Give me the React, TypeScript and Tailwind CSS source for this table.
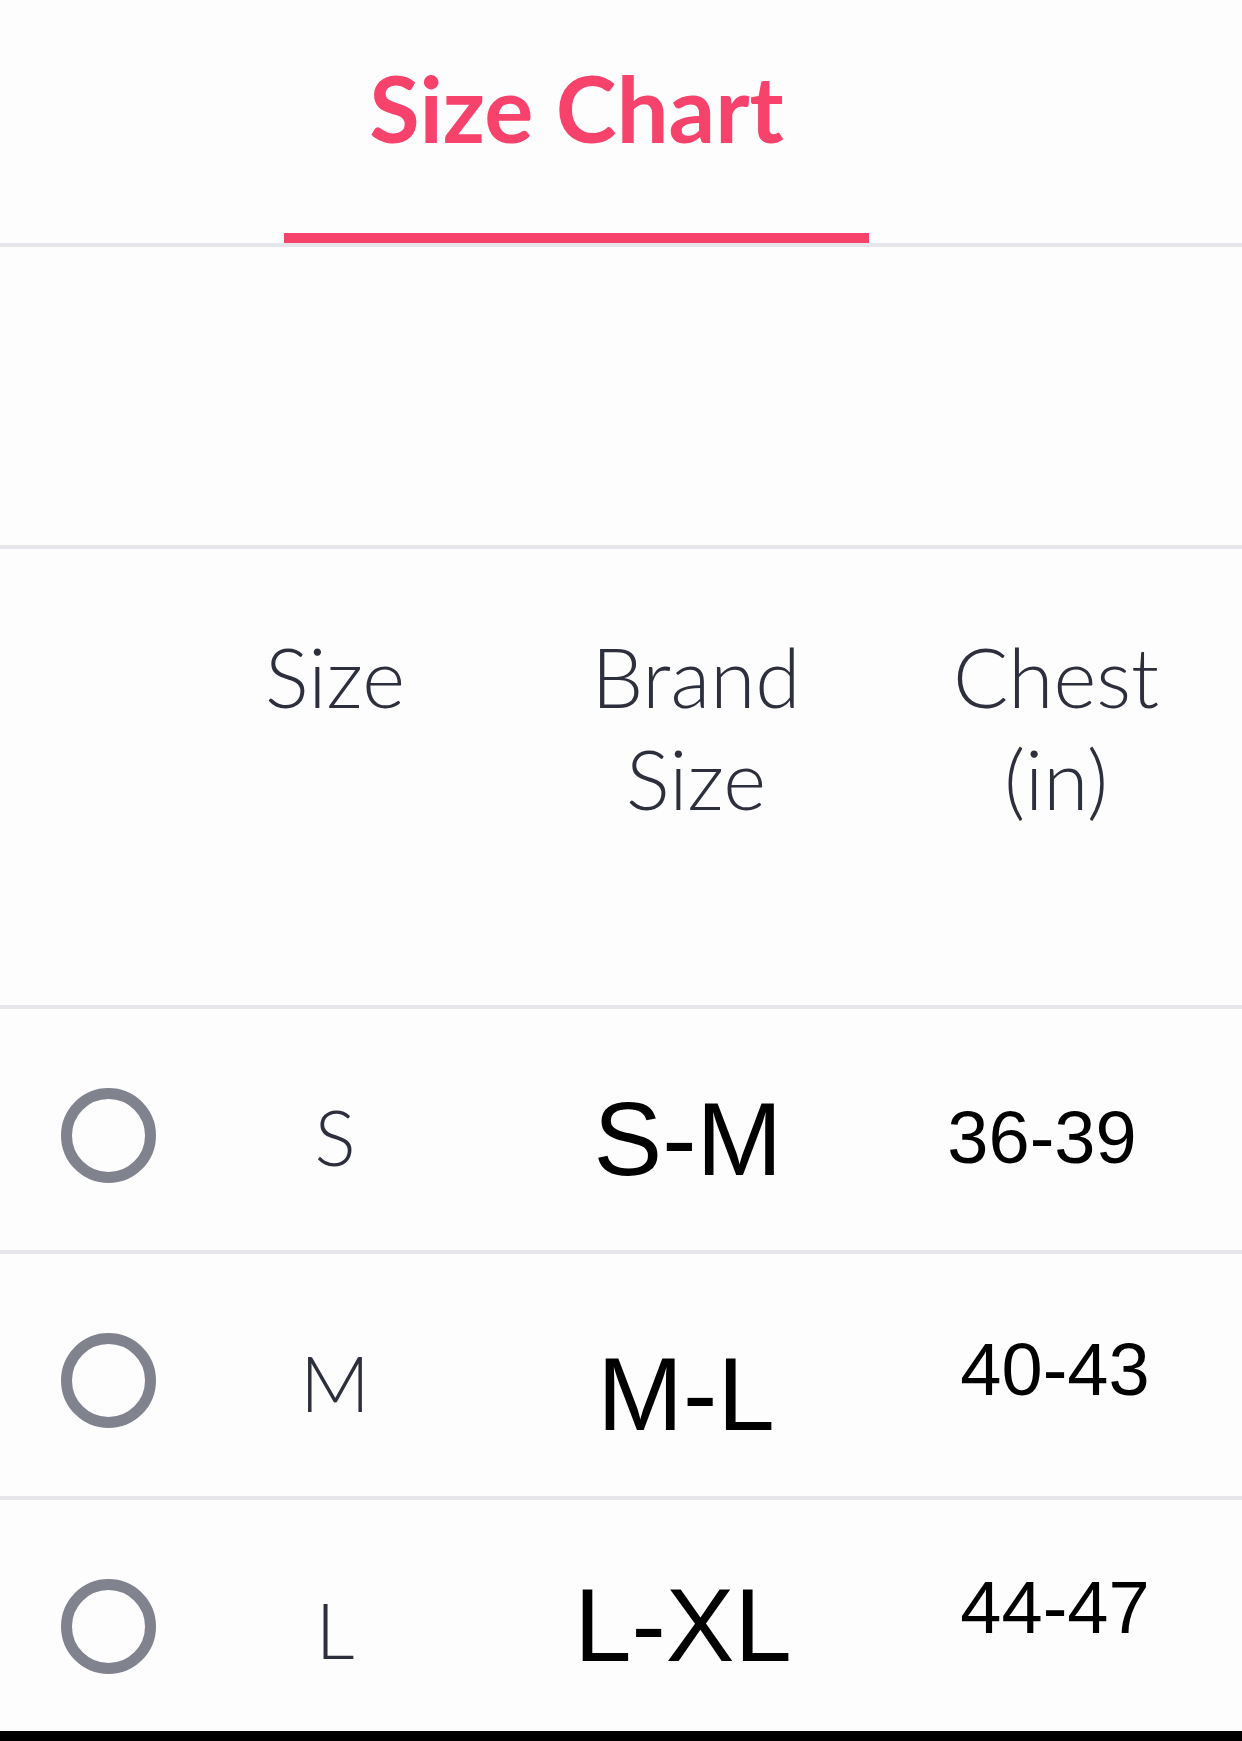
const rows = [
  {
    size: "S",
    brand: "S-M",
    chest: "36-39",
    ring: "mt-[12px]",
    sizeCls: "mt-[14px]",
    brandCls: "mt-[20px] pr-[8px]",
    chestCls: "mt-[16px] pr-[16px]",
    h: "h-[245px]",
  },
  {
    size: "M",
    brand: "M-L",
    chest: "40-43",
    ring: "mt-[10px]",
    sizeCls: "mt-[14px]",
    brandCls: "mt-[38px] pr-[12px]",
    chestCls: "mt-[-10px] pl-[10px]",
    h: "h-[246px]",
  },
  {
    size: "L",
    brand: "L-XL",
    chest: "44-47",
    ring: "mt-[22px]",
    sizeCls: "mt-[28px]",
    brandCls: "mt-[20px] pr-[18px]",
    chestCls: "mt-[-16px] pl-[10px]",
    h: "h-[231px]",
  },
];

const Radio = ({ className }: { className: string }) => (
  <div className={`h-[95px] w-[95px] rounded-full border-[11px] border-[#80828e] ${className}`} />
);

export default function App() {
  return (
    <div className="flex min-h-screen w-[1242px] flex-col bg-[#fdfdfd] font-['Lato',sans-serif]">
      {/* tab bar */}
      <div className="flex h-[247px] border-b-4 border-[#e6e6eb] pl-[284px]">
        <div className="flex w-[585px] flex-col items-center">
          <span className="pt-[62px] text-[92px] leading-none font-bold text-[#f7426c]">Size Chart</span>
          <div className="mt-auto h-[10px] w-full bg-[#f7426c]" />
        </div>
      </div>

      <div className="h-[302px] border-b-4 border-[#e6e6eb]" />

      {/* table header */}
      <div className="grid h-[460px] grid-cols-[216px_238px_476px_240px] border-b-4 border-[#e6e6eb] pt-[76px] text-[82px] leading-[102px] font-light text-[#2d2f3d]">
        <div />
        <div className="text-center">Size</div>
        <div className="pl-[8px] text-center">
          Brand
          <br />
          Size
        </div>
        <div className="pl-[12px] text-center">
          Chest
          <br />
          (in)
        </div>
      </div>

      {rows.map((r, i) => (
        <div
          key={r.size}
          className={`grid grid-cols-[216px_238px_476px_240px] items-center ${r.h} ${
            i < rows.length - 1 ? "border-b-4 border-[#e6e6eb]" : ""
          }`}
        >
          <div className="flex justify-center">
            <Radio className={r.ring} />
          </div>
          <div className={`text-center text-[77px] leading-none font-light text-[#2d2f3d] ${r.sizeCls}`}>{r.size}</div>
          <div className={`text-center font-['Liberation_Sans',sans-serif] text-[103px] leading-none text-black ${r.brandCls}`}>
            {r.brand}
          </div>
          <div className={`text-center font-['Liberation_Sans',sans-serif] text-[74px] leading-none text-black ${r.chestCls}`}>
            {r.chest}
          </div>
        </div>
      ))}

      <div className="h-[10px] bg-black" />
    </div>
  );
}
